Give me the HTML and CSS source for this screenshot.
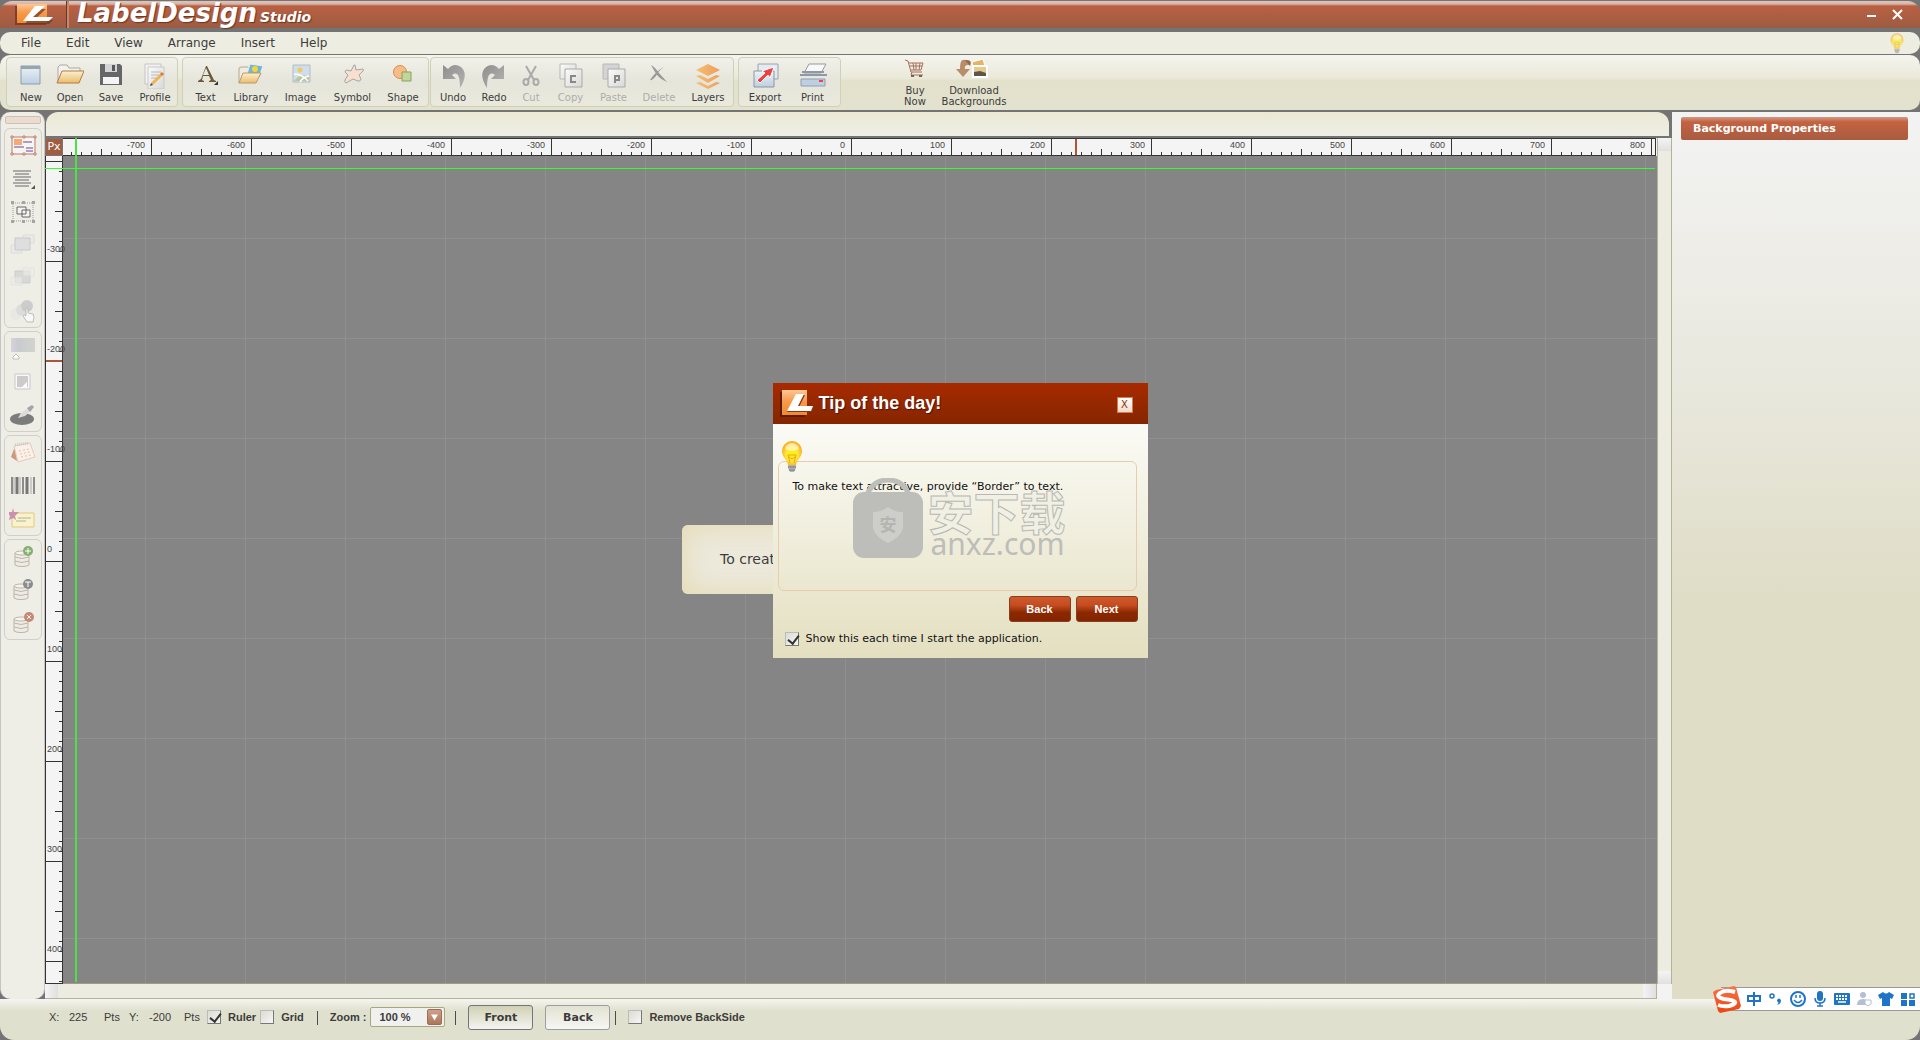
FILE: index.html
```html
<!DOCTYPE html>
<html lang="en">
<head>
<meta charset="utf-8">
<title>LabelDesign Studio</title>
<link rel="stylesheet" href="styles.css">
</head>
<body>
<svg class="defs" aria-hidden="true">
  <defs>
    <linearGradient id="gOrange" x1="0" y1="0" x2="0" y2="1"><stop offset="0" stop-color="#fbc894"/><stop offset=".45" stop-color="#f79a4c"/><stop offset="1" stop-color="#f08a2c"/></linearGradient>
    <linearGradient id="gFolder" x1="0" y1="0" x2="0" y2="1"><stop offset="0" stop-color="#faf0d0"/><stop offset="1" stop-color="#ecbc6c"/></linearGradient>
    <linearGradient id="gBlue" x1="0" y1="0" x2="0" y2="1"><stop offset="0" stop-color="#eef2f4"/><stop offset="1" stop-color="#bccfe2"/></linearGradient>
    <linearGradient id="gLayer" x1="0" y1="0" x2="1" y2="0"><stop offset="0" stop-color="#f2c070"/><stop offset="1" stop-color="#ee9e60"/></linearGradient>
    <linearGradient id="gGrey" x1="0" y1="0" x2="1" y2="1"><stop offset="0" stop-color="#8e8e8c"/><stop offset="1" stop-color="#b4b4b2"/></linearGradient>
    <linearGradient id="gPage" x1="0" y1="0" x2="1" y2="1"><stop offset="0" stop-color="#fbfbfb"/><stop offset="1" stop-color="#d8d8d6"/></linearGradient>
    <linearGradient id="gHue" x1="0" y1="0" x2="1" y2="0"><stop offset="0" stop-color="#d8d2da"/><stop offset=".3" stop-color="#c9cbd2"/><stop offset=".7" stop-color="#ccd2cc"/><stop offset="1" stop-color="#d4d2cc"/></linearGradient>
    <linearGradient id="gS" x1="0" y1="0" x2="0" y2="1"><stop offset="0" stop-color="#f8744a"/><stop offset="1" stop-color="#ee4410"/></linearGradient>
    <radialGradient id="gBulb" cx=".5" cy=".55" r=".55"><stop offset="0" stop-color="#fff600"/><stop offset=".55" stop-color="#ffe53a"/><stop offset="1" stop-color="#f8a818"/></radialGradient>
    <symbol id="logo" viewBox="0 0 40 24">
      <path d="M0 3h31v19H0z" fill="#7c4030"/><path d="M2 1h30v19H2z" fill="url(#gOrange)"/>
      <path d="M21 5h10L19 16h19l-4 4H10z" fill="#6e3424" opacity=".7" transform="translate(0 1)"/>
      <path d="M20 3h10L18 14h20l-4 4H8z" fill="#fff"/>
    </symbol>
    <symbol id="bulb" viewBox="0 0 24 34">
      <path d="M12 2a10 10 0 0 0-10 10c0 6 5 8 6 14h8c1-6 6-8 6-14A10 10 0 0 0 12 2z" fill="url(#gBulb)"/>
      <path d="M5 10a7 6 0 0 1 14 0q-7 4-14 0" fill="#fff" opacity=".55"/>
      <path d="M10 24l-2-8h8l-2 8M9 18l3 2 3-2" fill="none" stroke="#e8a818"/>
      <path d="M8 26h8v3l-2 4h-4l-2-4z" fill="#b4b4b4"/><path d="M8 28h8M9 31h6" stroke="#777"/>
    </symbol>
    <symbol id="db" viewBox="0 0 26 22">
      <path d="M4 6v12a8 3 0 0 0 14 0V6" fill="#eeebe4" stroke="#bcb5a9"/>
      <ellipse cx="11" cy="6" rx="7" ry="2" fill="#f5f3ee" stroke="#bcb5a9"/>
      <path d="M4 10q7 3 14 0M4 14q7 3 14 0" fill="none" stroke="#bcb5a9"/>
    </symbol>
  </defs>
</svg>

<header class="titlebar">
  <svg class="brand-logo"><use href="#logo"/></svg>
  <div class="brand"><span class="brand-name">LabelDesign</span><span class="brand-sub">Studio</span></div>
  <div class="window-controls">
    <button type="button" aria-label="Minimize"><svg width="11" height="11" viewBox="0 0 11 11"><path d="M1 7h9" stroke="#fff" stroke-width="2"/></svg></button>
    <button type="button" aria-label="Close"><svg width="11" height="11" viewBox="0 0 11 11"><path d="M1 1l9 9M10 1l-9 9" stroke="#fff" stroke-width="2"/></svg></button>
  </div>
</header>

<nav class="menubar">
  <button type="button">File</button><button type="button">Edit</button><button type="button">View</button><button type="button">Arrange</button><button type="button">Insert</button><button type="button">Help</button>
  <svg class="menu-bulb"><use href="#bulb"/></svg>
</nav>

<div class="toolbar">
  <div class="group group-file">
    <button type="button"><svg viewBox="0 0 28 28"><path d="M4 5h19v18H4z" fill="url(#gBlue)" stroke="#8f9dab"/><path d="M4 5h19v3H4z" fill="#97a4b1"/></svg>New</button>
    <button type="button"><svg viewBox="0 0 28 28"><path d="M2 22V6l2-2h7l2 3h11v5" fill="#f2f2f0" stroke="#a8a8a8"/><path d="M6 10h22l-5 12H1z" fill="url(#gFolder)" stroke="#b97942"/></svg>Open</button>
    <button type="button"><svg viewBox="0 0 28 28"><path d="M3 3h20l2 2v19H3z" fill="#666668"/><path d="M8 3h12v8H8z" fill="#d4d4d4"/><path d="M15 4h3v6h-3z" fill="#58585a"/><path d="M6 16h16v7H6z" fill="#f4f4f4"/></svg>Save</button>
    <button type="button"><svg viewBox="0 0 28 28"><path d="M4 3h16v20H4z" fill="#f2f2f0" stroke="#c4c4c4"/><path d="M7 6h16v22H7z" fill="url(#gPage)" stroke="#c8c8c8"/><path d="M10 11h10M10 14h8M10 17h9" stroke="#b8b8b8"/><path d="M11 23l10-10" stroke="#f1b350" stroke-width="3"/><path d="M20 14l2-2" stroke="#e07848" stroke-width="3"/><path d="M9 25l3-1-2-2z" fill="#444"/></svg>Profile</button>
  </div>
  <div class="group group-insert">
    <button type="button"><svg viewBox="0 0 28 28"><path d="M6 21h6v-1l-2-1 1-4h6l2 4-2 1v1h7v-1l-2-1L15 5h-1L9 18l-3 2zM11 14l3-7 3 7z" fill="#6b5a38" fill-rule="evenodd"/><path d="M26 20v4h-4z" fill="#333"/></svg>Text</button>
    <button type="button"><svg viewBox="0 0 28 28"><path d="M2 22V7l2-1h7l2 3h9v4" fill="#f0ece2" stroke="#b4a890"/><path d="M13 3l13 2-4 11-12-3z" fill="#75b5cf" stroke="#e8f0f0"/><circle cx="18" cy="8" r="3" fill="#f2d640"/><path d="M11 12l13 1-2 3z" fill="#62a048"/><path d="M6 12h18l-5 10H2z" fill="url(#gFolder)" stroke="#bd9a68"/></svg>Library</button>
    <button type="button"><svg viewBox="0 0 28 28"><path d="M6 4h17v17H6z" fill="#cfdeea" stroke="#b4bcc4"/><circle cx="13" cy="9" r="2.500" fill="#f2c95a"/><path d="M7 20q7-9 15-4v4z" fill="#b9c79a"/><path d="M7 13q8 0 14 7M13 21q3-5 9-6" stroke="#fff" fill="none" stroke-width="1.500"/></svg>Image</button>
    <button type="button"><svg viewBox="0 0 28 28"><path d="M16 4l1 5 7-1q1 1 0 2l-4 4 2 4q-1 3-3 2l-5-2-7 4q-2-1-1-3l3-5-3-3q0-2 2-2l4 1 3-6z" fill="#f8e0d0" stroke="#a8a4a4"/></svg>Symbol</button>
    <button type="button"><svg viewBox="0 0 28 28"><circle cx="11" cy="11" r="6.500" fill="#f8bc88" stroke="#dc8c48"/><path d="M13 11h9v9h-9z" fill="#c0d69a" stroke="#86a45a"/></svg>Shape</button>
  </div>
  <div class="group group-edit">
    <button type="button"><svg viewBox="0 0 28 28"><path d="M4 4v14h13l-4-4q8-6 8 13Q30 13 22 6q-7-5-13 2z" fill="url(#gGrey)"/></svg>Undo</button>
    <button type="button"><svg viewBox="0 0 28 28"><path d="M24 4v14H11l4-4q-8-6-8 13Q-2 13 6 6q7-5 13 2z" fill="url(#gGrey)"/></svg>Redo</button>
    <button type="button" disabled><svg viewBox="0 0 28 28"><g fill="none" stroke="#aaa"><path d="M9 5l8 14M19 5l-8 14" stroke-width="2"/><ellipse cx="9" cy="21" rx="2.500" ry="3" stroke-width="2"/><ellipse cx="19" cy="21" rx="2.500" ry="3" stroke-width="2"/></g></svg>Cut</button>
    <button type="button" disabled><svg viewBox="0 0 28 28"><path d="M3 3h16v15H3z" fill="url(#gPage)" stroke="#b8b8b8"/><path d="M8 8h17v18H8z" fill="url(#gPage)" stroke="#aaa"/><path d="M19 15h-5v6h5" fill="none" stroke="#888" stroke-width="2"/></svg>Copy</button>
    <button type="button" disabled><svg viewBox="0 0 28 28"><path d="M3 3h16v15H3z" fill="#d4d4d4" stroke="#b8b8b8"/><path d="M8 8h17v18H8z" fill="url(#gPage)" stroke="#aaa"/><path d="M15 22v-7h4v4h-4" fill="none" stroke="#888" stroke-width="2"/></svg>Paste</button>
    <button type="button" disabled><svg viewBox="0 0 28 28"><path d="M6 4q3 1 8 8l8 9q-9-4-12-10zM20 5q-6 4-9 10-4 5-6 4 5-8 15-14" fill="#999"/></svg>Delete</button>
    <button type="button"><svg viewBox="0 0 28 28"><g fill="url(#gLayer)"><path d="M14 3l12 6-12 6L2 9z"/><path d="M2 15l4-1 8 4 8-4 4 1-12 7z"/><path d="M2 22l4-1 8 4 8-4 4 1-12 6z"/></g></svg>Layers</button>
  </div>
  <div class="group group-output">
    <button type="button"><svg viewBox="0 0 28 28"><path d="M7 3h20v15H7z" fill="#e4ebf0" stroke="#98a4b0"/><path d="M3 10h20v16H3z" fill="url(#gBlue)" stroke="#8b97a3"/><path d="M6 19l8-7-3-2 12-4-4 11-2-3-8 8z" fill="#ee4040" stroke="#fff"/></svg>Export</button>
    <button type="button"><svg viewBox="0 0 28 28"><path d="M10 3h17l-5 9H5z" fill="#f8f8f8" stroke="#999"/><path d="M3 11h22M1 14h27" stroke="#9098a6" stroke-width="2"/><path d="M2 18h24v7H2z" fill="#bdcfe0" stroke="#8f9fb4"/><path d="M20 19h4v2h-4z" fill="#e84848"/></svg>Print</button>
  </div>
  <div class="group-links">
    <button type="button"><svg viewBox="0 0 28 28"><path d="M4 3l3 1 3 11h11M8 6h14l-2 7H10M8 9h13M12 6l1 7M15 6v7M19 6l-1 7" fill="none" stroke="#a86f5c"/><path d="M11 15l-1 3h12" fill="none" stroke="#a86f5c"/><path d="M10 18h3v2h-3zM18 18h3v2h-3z" fill="#79645c"/></svg>Buy<br>Now</button>
    <button type="button"><svg class="wide" viewBox="0 0 36 28"><path d="M14 8q-3-6-7-5-3 0-3 9H0l7 8 7-8H9q-1-3 2-4z" fill="#b98c6a"/><path d="M9 3q8-1 5 6" fill="#93684c"/><path d="M16 5l11-3 2 7-12 4z" fill="#e2b66a" stroke="#fff"/><path d="M17 9h14v11H17z" fill="#e7c98c" stroke="#fff" stroke-width="2"/><path d="M18 15l6-1 6 2v3H18z" fill="#5c5548"/></svg>Download<br>Backgrounds</button>
  </div>
</div>

<main class="main">
  <aside class="palette">
    <div class="handle"></div>
    <div class="tools">
      <button type="button" aria-label="Select"><svg viewBox="0 0 28 24"><path d="M3 3h23v17H3z" fill="#f8f4f2" stroke="#b97f6a"/><g fill="#fff" stroke="#b97f6a"><path d="M2 2h2v2H2zM14 2h2v2h-2zM25 2h2v2h-2zM2 19h2v2H2zM14 19h2v2h-2zM25 19h2v2h-2z"/></g><path d="M5 5h8v6H5z" fill="#f8a878"/><path d="M14 8h9M5 13h10M17 14h7M17 17h7" stroke="#9480b4" stroke-width="1.500"/></svg></button>
      <button type="button" aria-label="Align"><svg viewBox="0 0 28 24"><path d="M4 4h18M6 7h14M4 10h18M6 13h14M4 16h18M6 19h14" stroke="#666" stroke-width="1.200"/><path d="M26 18v4h-4z" fill="#555"/></svg></button>
      <button type="button" aria-label="Group"><svg viewBox="0 0 28 24"><path d="M4 3h20v18H4z" fill="none" stroke="#999" stroke-dasharray="1 1"/><path d="M2 1h3v3H2zM13 1h3v3h-3zM23 1h3v3h-3zM2 20h3v3H2zM13 20h3v3h-3zM23 20h3v3h-3z" fill="#a4a4a4"/><path d="M8 7h9v7H8zM13 10h8v7h-8z" fill="#f4f4f0" stroke="#666"/></svg></button>
      <button type="button" aria-label="Bring to front"><svg viewBox="0 0 28 24"><path d="M14 2h11v8H14zM2 12h11v8H2z" fill="#eaeae8" stroke="#dcdcda"/><path d="M6 5h15v12H6z" fill="#dedede" stroke="#c8c8c8"/></svg></button>
      <button type="button" aria-label="Send to back"><svg viewBox="0 0 28 24"><path d="M6 5h15v12H6z" fill="#d8d8d8" stroke="#ccc"/><path d="M14 2h11v8H14zM2 11h11v8H2z" fill="#ecece9" stroke="#dcdcda" opacity=".6"/></svg></button>
      <button type="button" aria-label="Opacity"><svg viewBox="0 0 28 24"><circle cx="7" cy="15" r="6" fill="#e8e8e4"/><circle cx="13" cy="11" r="6" fill="#dcdcda"/><circle cx="18" cy="7" r="6" fill="#ccc"/><path d="M17 9q2-1 2 2v3l5 1q2 3 0 8h-6l-4-6q1-2 3 0z" fill="#f8f8f8" stroke="#bcbcbc"/></svg></button>
    </div>
    <div class="tools">
      <button type="button" aria-label="Color"><svg viewBox="0 0 28 24"><path d="M2 1h24v14H2z" fill="url(#gHue)"/><path d="M4 22v-2l3-3 3 3v2z" fill="#fff" stroke="#bbb"/></svg></button>
      <button type="button" aria-label="Shadow"><svg viewBox="0 0 28 24"><path d="M6 4h15v15H6z" fill="#f8f8f8" stroke="#c8c8c8"/><path d="M8 6h11v11H8z" fill="#ccc"/><path d="M18 12v5h-5z" fill="#fff"/></svg></button>
      <button type="button" aria-label="Pick color"><svg viewBox="0 0 28 24"><ellipse cx="13" cy="16" rx="12" ry="6" fill="#7c7c7c"/><path d="M9 15l3-5 7-5 3 3-6 5z" fill="#dcdcdc"/><path d="M18 5l5-3 2 2-4 5z" fill="#a4a4a4"/></svg></button>
    </div>
    <div class="tools">
      <button type="button" aria-label="Calendar"><svg viewBox="0 0 28 24"><path d="M6 5L2 16l6 4z" fill="#c99a80"/><path d="M5 5l16-3 5 14-17 5z" fill="#fbf1e8" stroke="#e4cabc"/><path d="M6 4l14-2" stroke="#ccc" stroke-width="3" stroke-dasharray="1 1"/><path d="M10 10l10-2M11 13l10-2M12 16l10-2" stroke="#e4c0ac" stroke-dasharray="2 2"/></svg></button>
      <button type="button" aria-label="Barcode"><svg viewBox="0 0 28 24"><path d="M3 3v17M14 3v17M25 3v17" stroke="#8c8c8c" stroke-width="2"/><path d="M8 3v17M18 3v17" stroke="#777" stroke-width="3"/><path d="M5 3v17M11 3v17M22 3v17" stroke="#aaa"/></svg></button>
      <button type="button" aria-label="Certificate"><svg viewBox="0 0 28 24"><path d="M3 6h22v14H3z" fill="#f8f3cc" stroke="#e4c878"/><path d="M9 11h13M7 14h10" stroke="#b4b09c"/><path d="M4 1l1 4 5 0-4 4 1 4-3-2-4 2 1-4-3-4h5z" fill="#cb91ae"/></svg></button>
    </div>
    <div class="tools">
      <button type="button" aria-label="Add data"><svg viewBox="0 0 28 24"><use href="#db" x="2" y="2" width="26" height="22"/><circle cx="19" cy="6" r="5" fill="#84b070"/><path d="M16 6h6M19 3v6" stroke="#fff"/></svg></button>
      <button type="button" aria-label="Data text"><svg viewBox="0 0 28 24"><use href="#db" x="1" y="2" width="26" height="22"/><circle cx="19" cy="6" r="5" fill="#8c8c8c"/><path d="M16 4h6M19 4v5" stroke="#fff"/></svg></button>
      <button type="button" aria-label="Remove data"><svg viewBox="0 0 28 24"><use href="#db" x="1" y="2" width="26" height="22"/><circle cx="20" cy="6" r="5" fill="#c88872"/><path d="M18 4l4 4M22 4l-4 4" stroke="#fff"/></svg></button>
    </div>
  </aside>

  <section class="editor">
    <div class="tabstrip"></div>
    <div class="workspace">
      <div class="unit">Px</div>
      <div class="ruler-h"><span>-700</span><span>-600</span><span>-500</span><span>-400</span><span>-300</span><span>-200</span><span>-100</span><span>0</span><span>100</span><span>200</span><span>300</span><span>400</span><span>500</span><span>600</span><span>700</span><span>800</span><i class="mark-x"></i></div>
      <div class="canvas"><div class="hint">To creat</div></div>
      <div class="ruler-v"><span>-300</span><span>-200</span><span>-100</span><span>0</span><span>100</span><span>200</span><span>300</span><span>400</span><i class="mark-y"></i></div>
      <div class="scroll-v"><span></span><span></span></div>
      <div class="scroll-h"><span></span><span></span></div>
      <i class="guide-x"></i><i class="guide-y"></i>
    </div>
  </section>

  <aside class="properties"><h2>Background Properties</h2></aside>
</main>

<footer class="status">
  <span class="coord">X:</span><span class="value">225</span><span class="unit-label">Pts</span><span class="coord">Y:</span><span class="value">-200</span><span class="unit-label">Pts</span>
  <label><input type="checkbox" checked>Ruler</label>
  <label><input type="checkbox">Grid</label>
  <i class="sep"></i>
  <label class="zoom">Zoom :<span class="select"><select><option>100 %</option></select><svg viewBox="0 0 14 16"><path d="M3 5h8l-4 7z" fill="#fff"/></svg></span></label>
  <i class="sep"></i>
  <button type="button" class="side active">Front</button>
  <button type="button" class="side">Back</button>
  <i class="sep"></i>
  <label><input type="checkbox">Remove BackSide</label>
</footer>

<div class="ime">
  <svg class="ime-logo" viewBox="0 0 28 28"><path d="M3 5l18-4 2 1 5 19-2 3-19 4-2-2L0 7z" fill="url(#gS)"/><path d="M22 7Q12 4 7 8t4 6q10 1 11 3t-6 4q-6 1-11-1" fill="none" stroke="#fff" stroke-width="4"/></svg>
  <svg viewBox="0 0 18 18"><path d="M3 6h12v5H3zM9 2v14" fill="none" stroke="#1f74c9" stroke-width="2"/></svg>
  <svg viewBox="0 0 18 18"><circle cx="5" cy="6" r="2" fill="none" stroke="#1f74c9" stroke-width="1.500"/><path d="M10 10q2-3 4 0 0 4-4 5 2-2 1-3-1 0-1-2" fill="#1f74c9"/></svg>
  <svg viewBox="0 0 18 18"><circle cx="9" cy="9" r="7" fill="none" stroke="#1f74c9" stroke-width="2"/><path d="M7 5v3M11 5v3M5 10q4 5 8 0" fill="none" stroke="#1f74c9" stroke-width="1.500"/></svg>
  <svg viewBox="0 0 18 18"><rect x="6" y="1" width="6" height="10" rx="3" fill="#1f74c9"/><path d="M4 8q0 5 5 5t5-5M9 13v3M6 16h6" fill="none" stroke="#1f74c9" stroke-width="1.500"/></svg>
  <svg viewBox="0 0 18 18"><rect x="1" y="3" width="16" height="12" rx="1" fill="#1f74c9"/><path d="M3 6h12M3 9h12" stroke="#fff" stroke-width="2" stroke-dasharray="2 1"/><path d="M5 12h8" stroke="#fff" stroke-width="1.500"/></svg>
  <svg viewBox="0 0 18 18"><circle cx="8" cy="5" r="3" fill="#b4bfd6"/><path d="M2 15q0-6 6-6t6 6z" fill="#b4bfd6"/><path d="M10 10h6v4l-3 2-3-2z" fill="#fff" stroke="#b4bfd6"/></svg>
  <svg viewBox="0 0 18 18"><path d="M6 2q3 3 6 0l5 3-2 4-2-1v8H5V8L3 9 1 5z" fill="#1f74c9"/></svg>
  <svg viewBox="0 0 18 18"><path d="M2 3h6v6H2zM2 10h6v6H2zM10 10h6v6h-6z" fill="#1f74c9"/><path d="M11 4h4v4h-4z" fill="none" stroke="#1f74c9" stroke-width="1.500"/></svg>
</div>

<div class="overlay">
  <section class="dialog" role="dialog" aria-label="Tip of the day!">
    <header>
      <svg viewBox="0 0 34 28"><path d="M0 3h25v25H0z" fill="#5e1c08"/><path d="M2 1h25v25H2z" fill="url(#gOrange)"/><path d="M17 6h8l-6 12h15l-2 5H7z" fill="#8a3410"/><path d="M16 5h8l-6 12h15l-2 5H7z" fill="#fff"/></svg>
      <h1>Tip of the day!</h1>
      <button type="button" class="close">X</button>
    </header>
    <div class="dialog-body">
      <svg class="tip-bulb"><use href="#bulb"/></svg>
      <p class="tip">To make text attractive, provide “Border” to text.</p>
      <div class="actions"><button type="button">Back</button><button type="button">Next</button></div>
      <label><input type="checkbox" checked>Show this each time I start the application.</label>
    </div>
    <div class="watermark">
      <svg viewBox="0 0 72 80"><path d="M14 19Q20 2 36 2t22 17" fill="none" stroke="#bdbdb9" stroke-width="5"/><rect x="1" y="14" width="70" height="66" rx="11" fill="#bdbdb9"/><path d="M36 29q8 6 15 5v16q-2 9-15 15-13-6-15-15V34q8 0 15-5z" fill="#cdcdc9"/><text x="36" y="53" text-anchor="middle" class="mark-char">安</text></svg>
      <div><span class="mark-cn">安下载</span><span class="mark-url">anxz.com</span></div>
    </div>
  </section>
</div>
</body>
</html>
```
FILE: styles.css
```css
* { box-sizing: border-box; }
html, body { height: 100%; }
body {
  margin: 0;
  display: flex;
  flex-direction: column;
  overflow: hidden;
  background: #747474;
  color: #3c3c3c;
  font: 11px/14px "DejaVu Sans", Verdana, sans-serif;
}
button, input, select { font: inherit; color: inherit; margin: 0; }
button { border: 0; padding: 0; background: none; }
svg { display: block; flex: none; }
i { display: block; }
.defs { position: absolute; width: 0; height: 0; }

/* Title bar */
.titlebar {
  display: flex;
  align-items: center;
  flex: none;
  height: 27px;
  margin-top: 1px;
  border-radius: 12px 12px 0 0;
  background: linear-gradient(#e0c6bc 0, #d8b4a6 3px, #ba6042 5px, #9c5c42 100%);
}
.brand-logo { width: 40px; height: 24px; margin-left: 15px; }
.brand {
  display: flex;
  align-items: baseline;
  gap: 3px;
  height: 27px;
  margin-left: 12px;
  padding-left: 8px;
  border-left: 2px solid #d08468;
  box-shadow: -1px 0 #5c3c30;
  color: #fff;
  font-style: italic;
  font-weight: bold;
  text-shadow: 1px 1px 1px #6c3424;
}
.brand-name { font-size: 26px; line-height: 24px; }
.brand-sub { font-size: 14px; }
.window-controls { display: flex; gap: 15px; margin: 0 17px 0 auto; }

/* Menu bar */
.menubar {
  display: flex;
  align-items: center;
  flex: none;
  gap: 25px;
  height: 22px;
  margin-top: 4px;
  padding: 0 15px 0 21px;
  border-radius: 10px;
  background: #eeede1;
  font-size: 12px;
}
.menu-bulb { width: 16px; height: 22px; margin-left: auto; opacity: .65; }

/* Toolbar */
.toolbar {
  display: flex;
  gap: 4px;
  flex: none;
  height: 55px;
  margin: 1px 0 2px;
  padding: 2px 0 3px 6px;
  border-radius: 10px;
  background: linear-gradient(#f5f4ee 0, #e9e8d8 24px, #e3e1ca 25px, #e3e2cf 100%);
  font-size: 10px;
  line-height: 11px;
}
.group {
  display: grid;
  padding-top: 3px;
  border: 1px solid #d0cfb8;
  border-radius: 4px;
  background: linear-gradient(#f2f1e9, #e6e5db 50%, #eae9dc);
}
.group-file { grid-template-columns: 40px 38px 44px 44px; padding-left: 4px; }
.group-insert { grid-template-columns: 45px 46px 53px 51px 50px; }
.group-edit { grid-template-columns: 44px 38px 36px 43px 43px 48px 50px; margin-left: -3px; }
.group-output { grid-template-columns: 52px 43px; padding-right: 6px; }
.group-links { display: grid; grid-template-columns: 38px 80px; margin-left: 51px; }
.toolbar button { display: flex; flex-direction: column; align-items: center; gap: 3px; }
.toolbar svg { width: 28px; height: 28px; }
.toolbar svg.wide { width: 36px; }
.toolbar button:disabled { color: #adadab; }
.toolbar .group-links button { display: block; text-align: center; }
.group-links svg { margin: 0 auto; }

/* Work area */
.main { display: grid; grid-template-columns: 45px 1fr 248px; flex: 1; min-height: 0; }
.palette {
  display: flex;
  flex-direction: column;
  gap: 3px;
  padding: 4px 2px 0 3px;
  border: solid #c4c4c4;
  border-width: 0 1px;
  border-radius: 10px;
  background: #efeee6;
}
.handle { height: 8px; margin: 0 1px 1px; border: 1px solid #cfc0b4; border-radius: 2px; background: #ecdcd0; }
.tools { display: flex; flex-direction: column; border: 1px solid #d0d0c8; border-radius: 6px; }
.tools button { height: 33px; display: grid; place-items: center; }
.tools svg { width: 28px; height: 24px; }

.editor { display: flex; flex-direction: column; min-width: 0; }
.tabstrip { flex: none; height: 24px; margin: 0 3px 2px 1px; border-radius: 12px 12px 0 0; background: linear-gradient(#ebe9d4, #eeeee6); }
.workspace {
  position: relative;
  display: grid;
  grid-template: 18px 1fr 15px / 18px 1fr 15px;
  flex: 1;
  min-height: 0;
  background: #f3f3f3;
}
.unit { background: #a05c40; border: 1px solid #777; color: #fff; line-height: 16px; text-align: center; }
.ruler-h, .ruler-v {
  position: relative;
  display: flex;
  color: #444;
  font: 9px/12px "Liberation Sans", Arial, sans-serif;
  background-color: #f4f4f4;
}
.ruler-h {
  overflow: hidden;
  border: solid #333;
  border-width: 1px 1px 1px 0;
  margin-right: 1px;
  background-image: linear-gradient(90deg, #333 1px, transparent 1px), linear-gradient(90deg, #333 1px, transparent 1px), linear-gradient(90deg, #333 1px, transparent 1px);
  background-size: 100px 16px, 50px 6px, 10px 3px;
  background-position: 88px 0, 38px 100%, 8px 100%;
  background-repeat: repeat-x;
}
.ruler-h span { flex: none; width: 100px; padding: 0 6px 0 0; text-align: right; }
.ruler-h span:first-child { width: 88px; }
.ruler-v {
  grid-row: 2;
  grid-column: 1;
  flex-direction: column;
  border: 1px solid #333;
  border-top: 0;
  background-image: linear-gradient(#333 1px, transparent 1px), linear-gradient(#333 1px, transparent 1px), linear-gradient(#333 1px, transparent 1px);
  background-size: 16px 100px, 7px 50px, 3px 10px;
  background-position: 0 5px, 100% 5px, 100% 5px;
  background-repeat: repeat-y;
}
.ruler-v span { flex: none; height: 100px; padding: 82px 0 0 1px; white-space: nowrap; }
.ruler-v span:first-child { height: 105px; padding-top: 87px; }
.mark-x { position: absolute; left: 1012px; top: 0; width: 2px; height: 16px; background: #a85838; }
.mark-y { position: absolute; left: 0; top: 204px; width: 16px; height: 2px; background: #a85838; }
.canvas {
  grid-row: 2;
  grid-column: 2;
  display: flex;
  align-items: center;
  justify-content: center;
  padding-bottom: 20px;
  border-bottom: 1px solid #a39d7e;
  background: linear-gradient(90deg, #8f8f8f 1px, transparent 1px) 82px 0 / 100px 100%, linear-gradient(#8f8f8f 1px, transparent 1px) 0 82px / 100% 100px, #858585;
}
.hint {
  width: 356px;
  padding: 24px 0 24px 38px;
  border-radius: 6px;
  background: #ece9dc;
  box-shadow: inset 0 0 30px #e4d9b0;
  font-size: 14px;
  line-height: 21px;
}
.scroll-v, .scroll-h { display: flex; justify-content: space-between; background: #edece0; border: 1px solid #b5b29a; }
.scroll-v { grid-row: 1 / 3; grid-column: 3; flex-direction: column; border-width: 0 1px; }
.scroll-h { grid-row: 3; grid-column: 1 / 3; border-width: 0 1px 1px 0; }
.scroll-v span { height: 13px; background: linear-gradient(#f4f4f4, #e0e0e0); }
.scroll-h span { width: 13px; background: linear-gradient(90deg, #f4f4f4, #e0e0e0); }
.guide-x { position: absolute; left: 30px; top: 0; bottom: 17px; width: 2px; background: #4ce04c; }
.guide-y { position: absolute; top: 30px; left: 0; right: 17px; height: 1px; background: #30ff30; }

.properties { padding: 5px 12px 0 9px; background: linear-gradient(#f3f3f3, #e9e8de 30%, #dfddc6 55%, #dfddc6); }
.properties h2 {
  margin: 0;
  padding: 0 12px;
  border-radius: 2px;
  background: linear-gradient(#d09a86 0, #c46240 5px, #a85c42 100%);
  color: #fff;
  font-size: 11px;
  line-height: 23px;
}

/* Status bar */
.status {
  display: flex;
  align-items: flex-start;
  flex: none;
  height: 41px;
  padding: 6px 0 0 49px;
  border-radius: 0 0 14px 14px;
  background: linear-gradient(#f6f5f1, #dfe0ce 12px, #dfe0ce);
  font: 11px/24px "Liberation Sans", Arial, sans-serif;
}
.coord { width: 20px; }
.value { width: 35px; }
.unit-label { width: 25px; }
.value + .unit-label + label { margin-left: -2px; }
.status label { display: flex; align-items: center; gap: 7px; margin-right: 4px; height: 24px; font-weight: bold; }
.sep { width: 1px; height: 14px; margin: 6px 12px 0 9px; background: #4c4c4c; }
input[type="checkbox"] {
  appearance: none;
  width: 14px;
  height: 14px;
  border: 1px solid #9a9a9a;
  border-color: #bbb #777 #777 #bbb;
  background: linear-gradient(135deg, #dcdcd4, #f6f6f4);
}
input[type="checkbox"]:checked::after {
  content: "";
  display: block;
  width: 5px;
  height: 9px;
  margin: 0 0 0 4px;
  border: solid #333;
  border-width: 0 2px 2px 0;
  transform: rotate(38deg);
}
.status label.zoom { gap: 4px; margin-right: 1px; }
.select { display: flex; align-items: center; height: 20px; padding-right: 2px; border: 1px solid #aca67c; border-radius: 2px; background: #f0f0ee; }
.select select { appearance: none; width: 56px; height: 18px; padding: 0 0 0 8px; border: 0; background: none; font-weight: bold; line-height: 18px; }
.select svg { width: 15px; height: 16px; border: 1px solid #9c6c54; border-radius: 2px; background: linear-gradient(#d0a088, #a8785c); }
.side { width: 65px; height: 25px; margin-right: 12px; border: 1px solid #9c9ca4; border-radius: 3px; background: linear-gradient(#e2e2d2, #f6f6f4); font: bold 11px/22px "DejaVu Sans", Verdana, sans-serif; }
.side.active { border-color: #74747c; background: linear-gradient(#d0d1b4, #f4f4f0); }
.side + .sep { margin-left: -7px; }

/* Input method bar */
.ime {
  position: absolute;
  right: 0;
  bottom: 29px;
  display: flex;
  align-items: center;
  gap: 4px;
  height: 24px;
  padding-right: 3px;
  border: solid #999;
  border-width: 1px 0;
  background: #fff;
}
.ime svg { width: 18px; height: 18px; }
.ime .ime-logo { width: 28px; height: 28px; margin-left: -8px; }

/* Tip dialog */
.overlay { position: fixed; inset: 0; display: grid; place-items: center; pointer-events: none; }
.dialog { position: relative; width: 375px; background: linear-gradient(#fbfbf6 41px, #e4dfc0); color: #111; font-size: 11px; pointer-events: auto; }
.dialog header { display: flex; align-items: center; height: 41px; padding: 0 15px 0 7px; background: linear-gradient(#a82a00, #842600); }
.dialog header svg { width: 34px; height: 28px; }
.dialog h1 { margin: 0 auto 0 5px; color: #fff; font: bold 18px/20px "Liberation Sans", Arial, sans-serif; text-shadow: 1px 1px 1px #4c1400; }
.close { width: 16px; height: 16px; margin-top: 4px; border: 1px solid #d87c4c; background: linear-gradient(#fff, #f0dcc8); color: #8c3010; font-size: 10px; line-height: 14px; }
.dialog-body { position: relative; padding: 37px 10px 12px 5px; }
.tip-bulb { position: absolute; left: 7px; top: 15px; width: 24px; height: 34px; }
.tip { height: 130px; margin: 0 1px 5px 0; padding: 18px 14px; border: 1px solid #e8ccb0; border-radius: 6px; }
.actions { display: flex; justify-content: flex-end; gap: 5px; }
.actions button { width: 62px; height: 26px; border: 1px solid #84401c; border-radius: 3px; background: linear-gradient(#d05a2c 0, #c44c20 35%, #8a2800 65%, #842400); color: #fff; font: bold 11px/22px "Liberation Sans", Arial, sans-serif; }
.dialog-body label { display: flex; align-items: center; gap: 7px; margin: 10px 0 0 7px; line-height: 14px; }
.watermark { position: absolute; left: 79px; top: 95px; display: flex; gap: 4px; color: #bdbdb9; pointer-events: none; }
.watermark svg { width: 72px; height: 80px; }
.mark-char { font: bold 17px "Noto Sans CJK SC", sans-serif; fill: #b4b4b0; }
.mark-cn { display: block; height: 50px; font: bold 46px/64px "Noto Sans CJK SC", sans-serif; color: #f1f0e4; -webkit-text-stroke: 1px #b8b8b4; }
.mark-url { display: block; padding-left: 3px; font: 30px/32px "Noto Sans", sans-serif; }
```
